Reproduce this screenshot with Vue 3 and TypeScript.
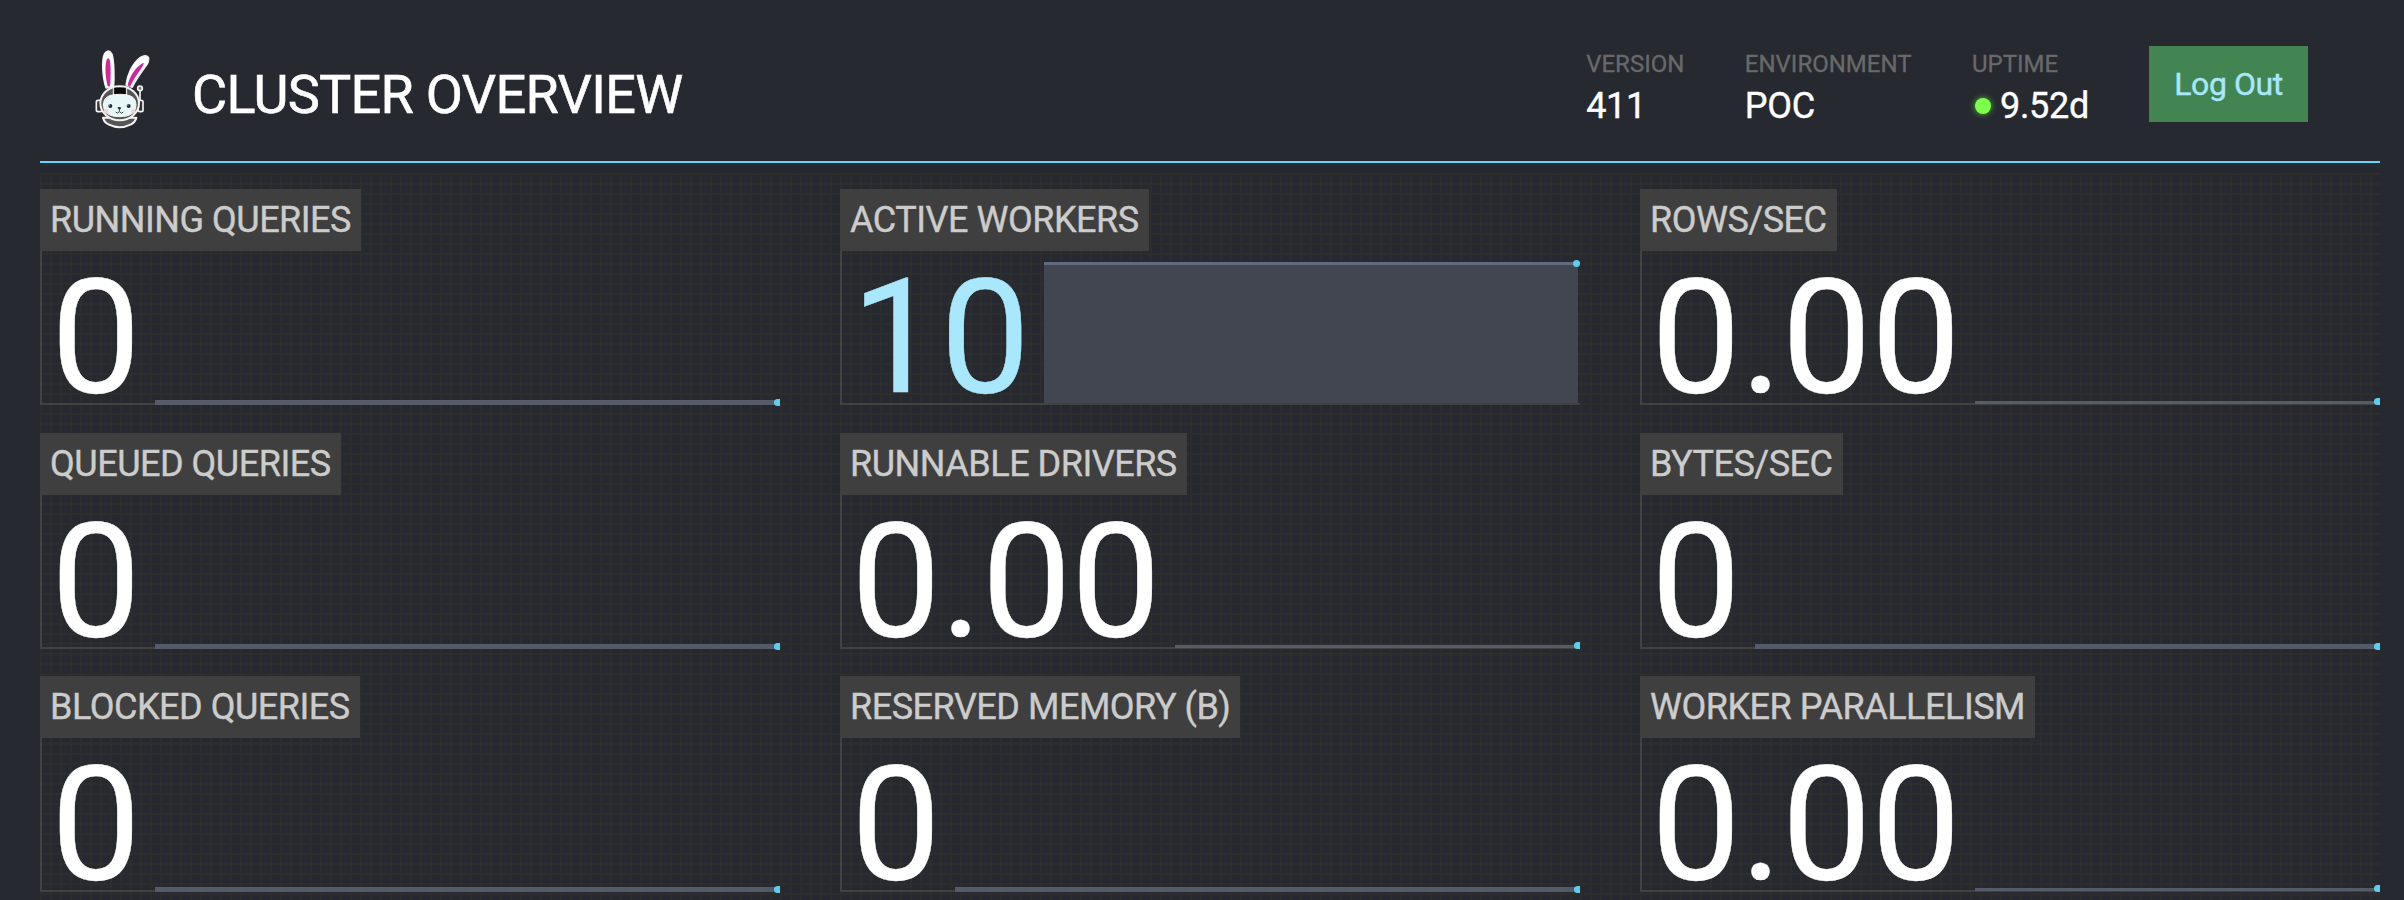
<script setup lang="ts">
interface Metric {
  label: string
  value: string
  full?: boolean
  thin?: boolean
}
const metrics: Metric[] = [
  { label: 'RUNNING QUERIES', value: '0' },
  { label: 'ACTIVE WORKERS', value: '10', full: true },
  { label: 'ROWS/SEC', value: '0.00', thin: true },
  { label: 'QUEUED QUERIES', value: '0' },
  { label: 'RUNNABLE DRIVERS', value: '0.00', thin: true },
  { label: 'BYTES/SEC', value: '0' },
  { label: 'BLOCKED QUERIES', value: '0' },
  { label: 'RESERVED MEMORY (B)', value: '0' },
  { label: 'WORKER PARALLELISM', value: '0.00', thin: true },
]
const info = [
  { label: 'VERSION', value: '411', dot: false },
  { label: 'ENVIRONMENT', value: 'POC', dot: false },
  { label: 'UPTIME', value: '9.52d', dot: true },
]
</script>

<template>
  <div class="page">
    <header class="header">
      <svg class="logo" viewBox="0 0 270 300">
        <g stroke="#f4f4f4" stroke-linecap="round" stroke-linejoin="round">
          <path d="M78 144C67 112 64 58 74 40Q86 25 96 42C103 64 103 116 101 141Z" fill="#fff" stroke-width="4" />
          <path d="M138 135C141 105 157 70 181 52Q198 42 206 53Q208 67 195 82C181 101 165 124 157 142Z" fill="#fff" stroke-width="4" />
          <path d="M83 139C75 108 74 70 81 58Q87 50 90 63C93 85 92 116 90 139Z" fill="#ce299b" stroke="none" />
          <path d="M143 136C149 109 165 82 190 68Q193 70 187 80C175 99 163 112 150 141Z" fill="#ce299b" stroke="none" />
          <path d="M69 233Q73 248 87 254Q119 270 153 253Q166 246 169 233Z" fill="#555" stroke-width="6" />
          <rect x="49" y="181" width="17" height="34" rx="5" fill="#333" stroke-width="5" />
          <rect x="174" y="181" width="15" height="34" rx="5" fill="#333" stroke-width="5" />
          <path d="M180 152V181" stroke-width="5" />
          <circle cx="180" cy="145" r="7" fill="#777" stroke-width="5" />
          <ellipse cx="119" cy="190" rx="58" ry="51" fill="#555" stroke-width="6" />
          <path d="M103 143H137V163H103Z" fill="#090909" stroke="none" />
          <path d="M100 142V164M140 142V164" stroke-width="3" />
          <path d="M70 195C70 172 86 163 119 163S168 172 168 195S151 230 119 230S70 218 70 195Z" fill="#e7f6f6" stroke-width="3" />
        </g>
        <circle cx="78" cy="214" r="7" fill="#f4d3d1" />
        <circle cx="160" cy="214" r="7" fill="#f4d3d1" />
        <circle cx="91" cy="198" r="6" fill="#222b2e" />
        <circle cx="146" cy="198" r="6" fill="#222b2e" />
        <circle cx="89" cy="195" r="1.8" fill="#fff" />
        <circle cx="144" cy="195" r="1.8" fill="#fff" />
        <path d="M112 203Q118 199 124 203L119 210Z" fill="#222b2e" />
        <path d="M118 208V214M107 216Q112 223 118 215Q125 223 130 216" fill="none" stroke="#222b2e" stroke-width="2.5" />
      </svg>
      <h1>CLUSTER OVERVIEW</h1>
      <dl class="info">
        <div v-for="i in info" :key="i.label" class="item">
          <dt>{{ i.label }}</dt>
          <dd><span v-if="i.dot" class="dot"></span>{{ i.value }}</dd>
        </div>
      </dl>
      <button class="logout" type="button">Log Out</button>
    </header>
    <main class="metrics">
      <section v-for="m in metrics" :key="m.label" class="metric">
        <h2>{{ m.label }}</h2>
        <div class="body">
          <span class="value" :class="{ active: m.full }">{{ m.value }}</span>
          <div class="spark" :class="{ full: m.full, thin: m.thin }"><i></i></div>
        </div>
      </section>
    </main>
  </div>
</template>

<style>
body {
  margin: 0;
  overflow: hidden;
  background: #262930;
}
</style>
<style scoped>
.page {
  box-sizing: border-box;
  height: 900px;
  padding: 0 24px 0 40px;
  color: #fff;
  background: #262930;
  font-family: Roboto, sans-serif;
}
.header {
  box-sizing: border-box;
  display: flex;
  align-items: flex-start;
  height: 163px;
  padding: 40px 72px 0 40px;
  border-bottom: 2px solid #61d5fa;
}
.logo {
  width: 90px;
  height: 100px;
}
h1 {
  margin: 22px 0 0 22px;
  font-size: 54px;
  font-weight: 400;
  letter-spacing: -0.7px;
  line-height: 66px;
  white-space: nowrap;
  -webkit-text-stroke: 0.6px currentColor;
}
.info {
  display: flex;
  gap: 60.5px;
  margin: 9px 60px 0 auto;
}
dt {
  color: #696969;
  font-size: 24px;
  line-height: 30px;
  -webkit-text-stroke: 0.3px currentColor;
}
dd {
  display: flex;
  align-items: center;
  margin: 6px 0 0;
  font-size: 36px;
  letter-spacing: -0.3px;
  line-height: 42px;
  -webkit-text-stroke: 0.4px currentColor;
}
.dot {
  width: 16px;
  height: 16px;
  margin: 0 9px 0 3px;
  border-radius: 50%;
  background: #7cff4b;
  box-shadow: 0 0 6px #56b936;
}
.logout {
  width: 159px;
  height: 76px;
  margin-top: 6px;
  padding: 0;
  border: 0;
  color: #a9e7fc;
  background: #428553;
  font: 400 32px/76px Roboto, sans-serif;
  letter-spacing: -0.45px;
  -webkit-text-stroke: 0.4px currentColor;
}
.metrics {
  display: grid;
  grid-template-columns: repeat(3, 740px);
  grid-auto-rows: 216.5px;
  gap: 27px 60px;
  height: 727px;
  box-sizing: border-box;
  margin-top: 10px;
  padding-top: 16px;
  background-image:
    linear-gradient(#2d2d2d 2px, transparent 2px),
    linear-gradient(90deg, #2d2d2d 2px, transparent 2px);
  background-size: 10px 10px;
}
.metric {
  display: flex;
  flex-direction: column;
  align-items: flex-start;
}
h2 {
  margin: 0;
  padding: 0 10px;
  color: #ccc;
  background: #3f3f3f;
  font-size: 36px;
  font-weight: 400;
  letter-spacing: -0.48px;
  line-height: 62px;
  white-space: nowrap;
  -webkit-text-stroke: 0.4px currentColor;
}
.body {
  box-sizing: border-box;
  display: flex;
  align-items: flex-end;
  width: 740px;
  height: 154.4px;
  padding-left: 9px;
  border-left: 2px solid #424242;
  border-bottom: 2px solid #424242;
}
.value {
  align-self: flex-start;
  height: 152px;
  margin-right: 14.5px;
  font-size: 160px;
  letter-spacing: -0.7px;
  line-height: 174px;
  -webkit-text-stroke: 0.4px currentColor;
}
.value.active {
  color: #a9e7fc;
}
.spark {
  position: relative;
  flex: 1;
  height: 5px;
  margin-bottom: -2px;
  background: #555b69;
}
.spark.thin {
  height: 3px;
  margin-bottom: -1px;
}
.spark.full {
  box-sizing: border-box;
  height: 141px;
  margin: 0 2px 0 0;
  border-top: 3px solid #636a80;
  background: #424651;
}
.spark i {
  position: absolute;
  right: 0;
  top: -1px;
  width: 6px;
  height: 7px;
  border-radius: 4px 0 0 4px;
  background: #5dcfee;
}
.spark.thin i {
  top: -3px;
}
.spark.full i {
  top: -5px;
  right: -2px;
  width: 7px;
  border-radius: 50%;
}
</style>
